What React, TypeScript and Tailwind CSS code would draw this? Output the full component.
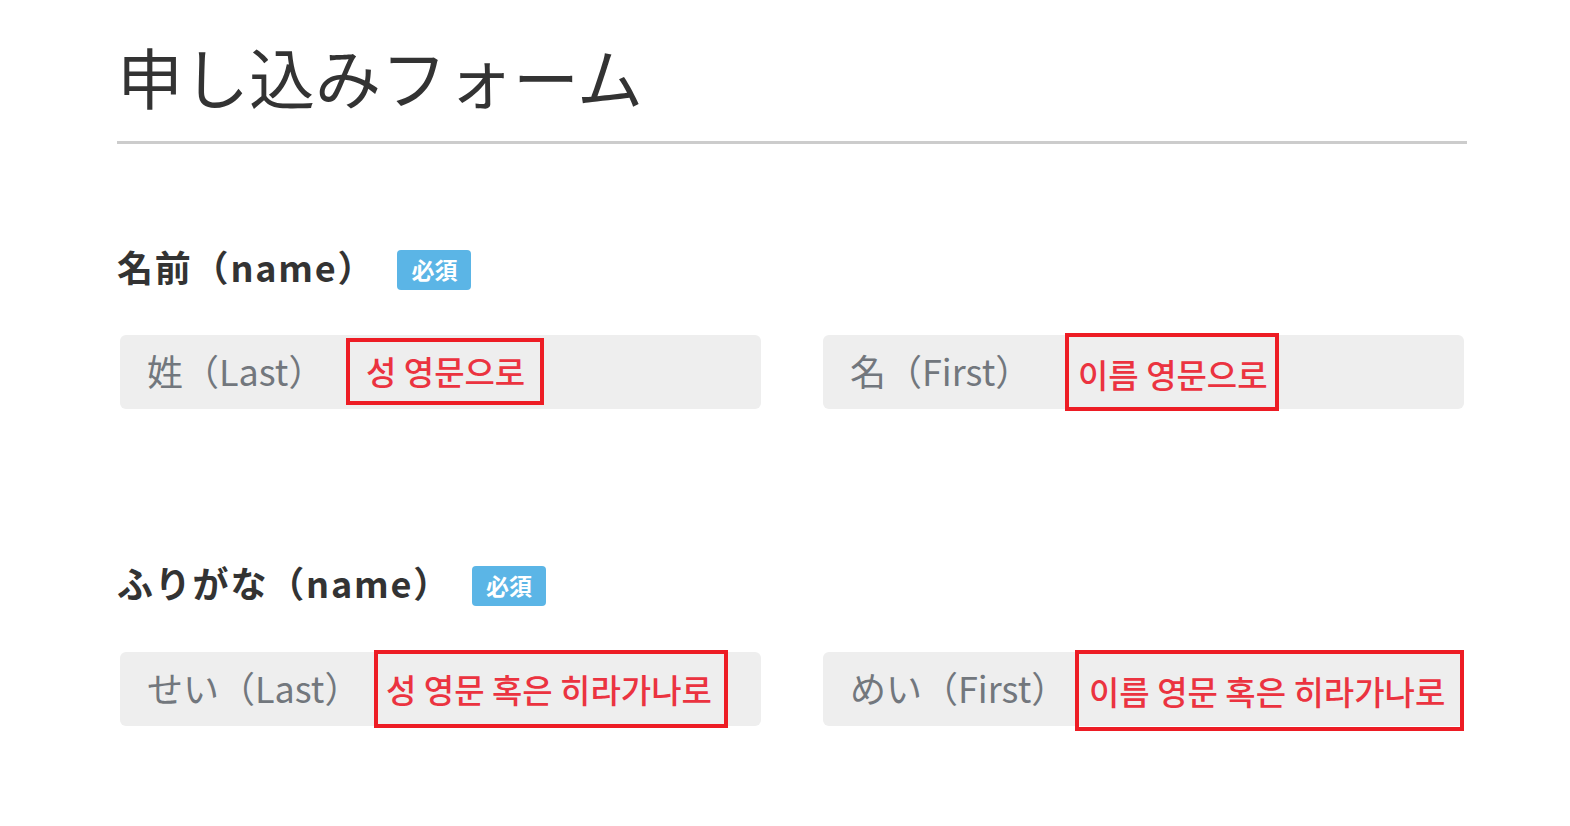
import React from "react";

const jp = { fontFamily: '"Noto Sans CJK JP", "Noto Sans", sans-serif' };
const kr = { fontFamily: '"Noto Sans CJK KR", "Noto Sans", sans-serif' };

function Badge() {
  return (
    <span
      className="inline-flex items-center justify-center w-[74px] h-[40px] rounded-[4px] bg-[#5bb5e6] text-white text-[23px] font-bold leading-none"
      style={jp}
    >
      必須
    </span>
  );
}

function Field({
  label,
  note,
  box,
}: {
  label: string;
  note: string;
  box: string;
}) {
  return (
    <div className="relative flex-1 h-[74px] rounded-[6px] bg-[#eeeeee] flex items-center pl-[27px] pb-[5px]">
      <span className="text-[36px] text-[#72777d] leading-none" style={jp}>
        {label}
      </span>
      <div className={`absolute border-[4px] border-[#ed1c24] flex items-center ${box}`}>
        <span className="text-[33px] font-medium text-[#eb3340] leading-none whitespace-nowrap" style={kr}>
          {note}
        </span>
      </div>
    </div>
  );
}

export default function App() {
  return (
    <div className="min-h-[826px] w-[1570px] bg-white" style={jp}>
      <div className="ml-[117px] w-[1350px] pt-[27px]">
        <h1 className="text-[66px] leading-[96px] text-[#333333] font-normal" style={jp}>
          申し込みフォーム
        </h1>
        <div className="mt-[18px] border-t-[3px] border-[#cccccc]" />

        <div className="mt-[95px] flex items-center h-[54px]">
          <h2 className="text-[36px] font-bold text-[#333333] leading-none tracking-[0.05em]" style={jp}>
            名前（name）
          </h2>
          <span className="ml-[22px] mt-[7px]">
            <Badge />
          </span>
        </div>
        <div className="mt-[42px] flex gap-[62px] px-[3px]">
          <Field
            label="姓（Last）"
            note="성 영문으로"
            box="left-[226px] top-[3px] w-[198px] h-[67px] pl-[16px]"
          />
          <Field
            label="名（First）"
            note="이름 영문으로"
            box="left-[242px] top-[-2px] w-[214px] h-[78px] pl-[9px] pt-[4px]"
          />
        </div>

        <div className="mt-[146px] flex items-center h-[54px]">
          <h2 className="text-[36px] font-bold text-[#333333] leading-none tracking-[0.05em]" style={jp}>
            ふりがな（name）
          </h2>
          <span className="ml-[21px] mt-[7px]">
            <Badge />
          </span>
        </div>
        <div className="mt-[43px] flex gap-[62px] px-[3px]">
          <Field
            label="せい（Last）"
            note="성 영문 혹은 히라가나로"
            box="left-[254px] top-[-2px] w-[354px] h-[78px] pl-[8px]"
          />
          <Field
            label="めい（First）"
            note="이름 영문 혹은 히라가나로"
            box="left-[252px] top-[-2px] w-[389px] h-[81px] pl-[10px] pt-[2px]"
          />
        </div>
      </div>
    </div>
  );
}
